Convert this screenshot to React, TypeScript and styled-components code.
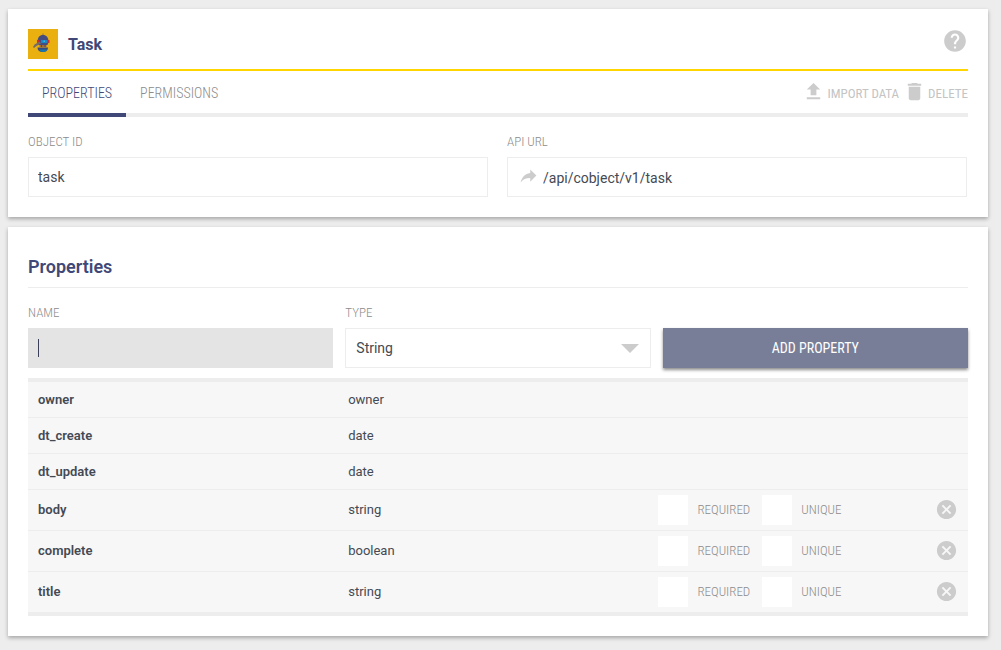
import React, { useState } from "react";
import styled, { createGlobalStyle, css } from "styled-components";

const condensed = `"Roboto Condensed", Roboto, "Liberation Sans", sans-serif`;

const GlobalStyle = createGlobalStyle`
  *, *::before, *::after { box-sizing: border-box; }
  body {
    margin: 0;
    background: #ededed;
    color: #444a54;
    font-family: Roboto, "Liberation Sans", sans-serif;
    font-size: 13px;
    line-height: 16px;
  }
  button, input, select { font: inherit; color: inherit; }
`;

const Page = styled.main`
  display: flex;
  flex-direction: column;
  gap: 10px;
  padding: 9px 13px 14px 8px;
`;

const Card = styled.section`
  padding: 20px;
  background: #fff;
  box-shadow: 0 2px 4px rgba(0, 0, 0, 0.3);
`;

const CardHeader = styled.header`
  display: flex;
  gap: 10px;
  height: 42px;
  border-bottom: 2px solid #ffd600;
`;

const Title = styled.h1`
  flex: 1;
  margin: 0;
  color: #404878;
  font-size: 16px;
  font-weight: 700;
  line-height: 32px;
`;

const IconButton = styled.button`
  display: flex;
  padding: 0;
  border: 0;
  background: none;
  color: #ccc;
  cursor: pointer;
`;

const HelpButton = styled(IconButton)`
  align-self: flex-start;
  margin-top: -1px;
`;

const TabBar = styled.nav`
  display: flex;
  justify-content: space-between;
  height: 46px;
  border-bottom: 4px solid #ededed;
`;

const TabGroup = styled.div`
  display: flex;
  margin-bottom: -4px;
`;

const Tab = styled.button<{ $active?: boolean }>`
  padding: 2px 14px 0;
  border: 0;
  border-bottom: 4px solid ${(p) => (p.$active ? "#404878" : "transparent")};
  background: none;
  color: ${(p) => (p.$active ? "#404878" : "#8c8c8c")};
  font-family: ${condensed};
  font-size: 14px;
  font-weight: 300;
  cursor: pointer;
`;

const Actions = styled.div`
  display: flex;
  align-items: center;
  gap: 4px;
`;

const Action = styled.button`
  display: flex;
  align-items: center;
  gap: 2px;
  padding: 0 0 2px;
  border: 0;
  background: none;
  color: #c4c4c4;
  font-family: ${condensed};
  font-size: 13px;
  font-weight: 400;
  cursor: pointer;

  svg { color: #ccc; }
  span { padding-top: 6px; }
`;

const FieldRow = styled.div<{ $columns: number }>`
  display: grid;
  grid-template-columns: repeat(${(p) => p.$columns}, 1fr);
  gap: ${(p) => (p.$columns === 2 ? 19 : 12)}px;
  align-items: end;
  padding: 17px ${(p) => (p.$columns === 2 ? 1 : 0)}px 0 0;
`;

const Field = styled.div`
  display: flex;
  flex-direction: column;
  gap: 7px;
`;

const caption = css`
  color: #8c8c8c;
  font-family: ${condensed};
  font-size: 13px;
  font-weight: 300;
`;

const Label = styled.label`
  ${caption}
`;

const control = css`
  width: 100%;
  height: 40px;
  padding: 0 10px;
  border: 1px solid #ededed;
  border-radius: 0;
  outline: 0;
  background-color: #fff;
  font-size: 14px;
`;

const TextInput = styled.input`
  ${control}
  padding: 0 9px;
`;

const NameInput = styled.input`
  ${control}
  border-color: #e4e4e4;
  background: linear-gradient(#3b4058, #3b4058) 9px center / 1px 18px no-repeat #e4e4e4;
  caret-color: transparent;
`;

const LinkBox = styled.div`
  ${control}
  display: flex;
  align-items: center;
  gap: 4px;

  svg {
    margin-bottom: 4px;
    color: #ccc;
  }
`;

const LinkInput = styled.input`
  flex: 1;
  min-width: 0;
  padding: 2px 0 0;
  border: 0;
  outline: 0;
  background: none;
`;

const SelectBox = styled.div`
  position: relative;

  &::after {
    content: "";
    position: absolute;
    top: 16px;
    right: 12px;
    border: 9px solid transparent;
    border-top-color: #ccc;
    border-bottom: 0;
    pointer-events: none;
  }
`;

const Select = styled.select`
  ${control}
  appearance: none;
`;

const PrimaryButton = styled.button`
  height: 40px;
  border: 0;
  background: #797e98;
  box-shadow: 0 2px 3px rgba(0, 0, 0, 0.45);
  color: #fff;
  font-family: ${condensed};
  font-size: 14px;
  font-weight: 400;
  cursor: pointer;
`;

const SectionTitle = styled.h2`
  margin: 0;
  padding: 8px 0;
  border-bottom: 1px solid #ededed;
  color: #404878;
  font-size: 18px;
  font-weight: 600;
  line-height: 24px;
`;

const Table = styled.table`
  width: 100%;
  margin-top: 10px;
  border-top: 4px solid #ededed;
  border-bottom: 4px solid #ededed;
  border-spacing: 0;
  table-layout: fixed;
  background: #f7f7f7;
`;

const Row = styled.tr<{ $editable: boolean }>`
  height: ${(p) => (p.$editable ? 41 : 36)}px;

  &:not(:last-child) > * { border-bottom: 1px solid #ededed; }
  &:last-child { height: 40px; }
`;

const NameCell = styled.th`
  width: 33%;
  padding: 0 10px;
  font-weight: 600;
  text-align: left;
`;

const TypeCell = styled.td`
  width: 33%;
  padding: 0 10px;
`;

const OptionsCell = styled.td`
  padding: 0 10px;
`;

const Options = styled.div`
  display: flex;
  align-items: center;
  gap: 12px;
`;

const Option = styled.label`
  ${caption}
  display: flex;
  align-items: center;
  gap: 9px;
`;

const Checkbox = styled.input`
  width: 30px;
  height: 30px;
  margin: 0;
  appearance: none;
  background: #fff;

  &:checked { box-shadow: inset 0 0 0 8px #fff, inset 0 0 0 15px #404878; }
`;

const RemoveButton = styled(IconButton)`
  margin-left: auto;
  padding-bottom: 2px;
`;

const glyphs = {
  help: "M12 2C6.48 2 2 6.48 2 12s4.48 10 10 10 10-4.48 10-10S17.52 2 12 2zm1 17h-2v-2h2v2zm2.07-7.75l-.9.92C13.45 12.9 13 13.5 13 15h-2v-.5c0-1.1.45-2.1 1.17-2.83l1.24-1.26c.37-.36.59-.86.59-1.41 0-1.1-.9-2-2-2s-2 .9-2 2H8c0-2.21 1.79-4 4-4s4 1.79 4 4c0 .88-.36 1.68-.93 2.25z",
  upload: "M9 16h6v-6h4l-7-7-7 7h4zm-4 2h14v2H5z",
  trash: "M6 19c0 1.1.9 2 2 2h8c1.1 0 2-.9 2-2V7H6v12zM19 4h-3.5l-1-1h-5l-1 1H5v2h14V4z",
  share: "M14 9V5l7 7-7 7v-4.1c-5 0-8.5 1.6-11 5.1 1-5 4-10 11-11z",
  cancel: "M12 2C6.47 2 2 6.47 2 12s4.47 10 10 10 10-4.47 10-10S17.53 2 12 2zm5 13.59L15.59 17 12 13.41 8.41 17 7 15.59 10.59 12 7 8.41 8.41 7 12 10.59 15.59 7 17 8.41 13.41 12 17 15.59z",
};

function Glyph({ name, size }: { name: keyof typeof glyphs; size: number }) {
  return (
    <svg width={size} height={size} viewBox="0 0 24 24" fill="currentColor" aria-hidden="true">
      <path d={glyphs[name]} />
    </svg>
  );
}

function RobotLogo() {
  return (
    <svg width="30" height="30" viewBox="0 0 30 30" aria-hidden="true">
      <rect width="30" height="30" fill="#eab010" />
      <path d="M14.500 4.500h1v2h-1z" fill="#8b7048" />
      <path d="M9.500 13c0-4.500 2-7 5.500-7s5.500 2.500 5.500 7l-1 3h-9z" fill="#454d80" />
      <path d="M9 11h2v3H9zM19.500 11h2v3h-2z" fill="#d02b34" />
      <path d="M13 11h6.500v3H13z" fill="#1787c7" />
      <path d="M15.500 11.500h1.500v1.500h-1.500z" fill="#48b7e0" />
      <path d="M5 18l1.500-2.500 5-3 1.500 2-4.500 2.500L6 19z" fill="#756c68" />
      <path d="M11.500 16h7v2h-7z" fill="#a66b32" />
      <path d="M13 16h1v2h-1zM16.500 16h1v2h-1z" fill="#454d80" />
      <path d="M9.500 18.500h10.500c0 3-2 4.500-5.200 4.500s-5.300-1.500-5.300-4.500z" fill="#39477f" />
      <path d="M11 20.500h8c-.8 1.700-2.200 2.500-4 2.500s-3.200-.8-4-2.500z" fill="#1679ac" />
    </svg>
  );
}

const properties = [
  { name: "owner", type: "owner", editable: false },
  { name: "dt_create", type: "date", editable: false },
  { name: "dt_update", type: "date", editable: false },
  { name: "body", type: "string", editable: true },
  { name: "complete", type: "boolean", editable: true },
  { name: "title", type: "string", editable: true },
];

export default function App() {
  const [tab, setTab] = useState("PROPERTIES");

  return (
    <>
      <GlobalStyle />
      <Page>
        <Card>
          <CardHeader>
            <RobotLogo />
            <Title>Task</Title>
            <HelpButton type="button" aria-label="Help">
              <Glyph name="help" size={26} />
            </HelpButton>
          </CardHeader>
          <TabBar>
            <TabGroup>
              {["PROPERTIES", "PERMISSIONS"].map((name) => (
                <Tab key={name} type="button" $active={tab === name} onClick={() => setTab(name)}>
                  {name}
                </Tab>
              ))}
            </TabGroup>
            <Actions>
              <Action type="button">
                <Glyph name="upload" size={23} />
                <span>IMPORT DATA</span>
              </Action>
              <Action type="button">
                <Glyph name="trash" size={23} />
                <span>DELETE</span>
              </Action>
            </Actions>
          </TabBar>
          <FieldRow $columns={2}>
            <Field>
              <Label htmlFor="object-id">OBJECT ID</Label>
              <TextInput id="object-id" defaultValue="task" />
            </Field>
            <Field>
              <Label htmlFor="api-url">API URL</Label>
              <LinkBox>
                <Glyph name="share" size={21} />
                <LinkInput id="api-url" readOnly value="/api/cobject/v1/task" />
              </LinkBox>
            </Field>
          </FieldRow>
        </Card>

        <Card>
          <SectionTitle>Properties</SectionTitle>
          <FieldRow $columns={3}>
            <Field>
              <Label htmlFor="property-name">NAME</Label>
              <NameInput id="property-name" />
            </Field>
            <Field>
              <Label htmlFor="property-type">TYPE</Label>
              <SelectBox>
                <Select id="property-type" defaultValue="String">
                  <option>String</option>
                  <option>Boolean</option>
                  <option>Date</option>
                </Select>
              </SelectBox>
            </Field>
            <PrimaryButton type="button">ADD PROPERTY</PrimaryButton>
          </FieldRow>
          <Table>
            <tbody>
              {properties.map((p) => (
                <Row key={p.name} $editable={p.editable}>
                  <NameCell scope="row">{p.name}</NameCell>
                  <TypeCell>{p.type}</TypeCell>
                  <OptionsCell>
                    {p.editable && (
                      <Options>
                        <Option>
                          <Checkbox type="checkbox" />
                          REQUIRED
                        </Option>
                        <Option>
                          <Checkbox type="checkbox" />
                          UNIQUE
                        </Option>
                        <RemoveButton type="button" aria-label={`Remove ${p.name}`}>
                          <Glyph name="cancel" size={23} />
                        </RemoveButton>
                      </Options>
                    )}
                  </OptionsCell>
                </Row>
              ))}
            </tbody>
          </Table>
        </Card>
      </Page>
    </>
  );
}
